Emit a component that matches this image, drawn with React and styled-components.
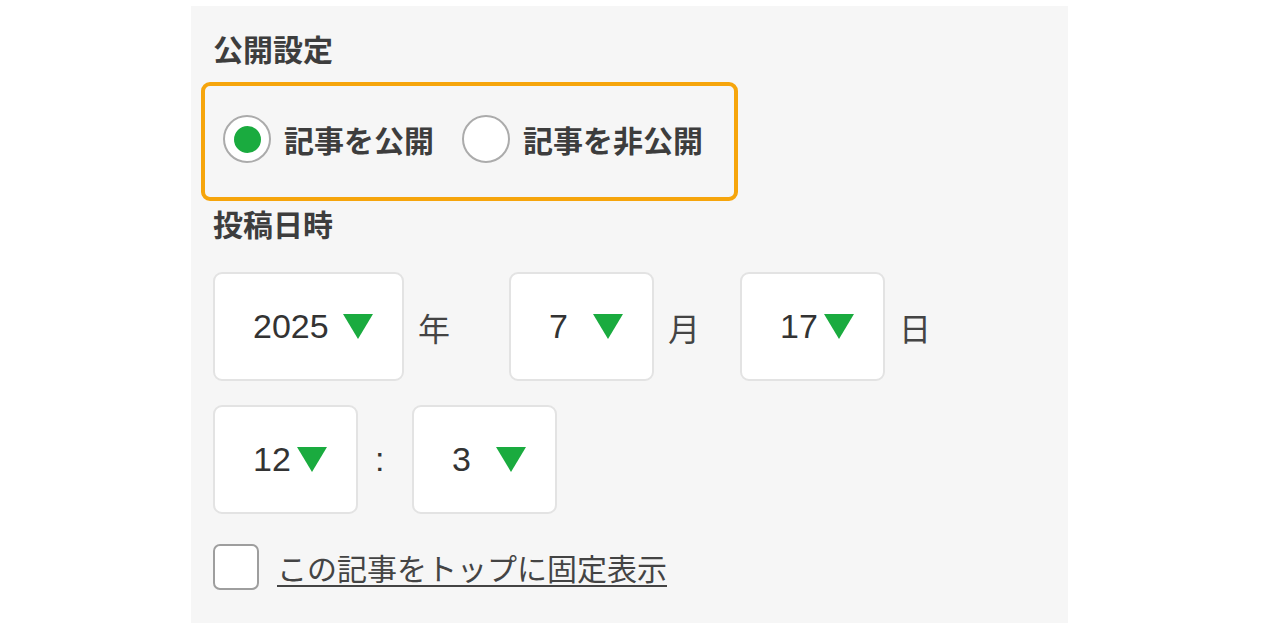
import React from "react";
import styled, { createGlobalStyle } from "styled-components";

const GlobalStyle = createGlobalStyle`
  body {
    margin: 0;
    background: #ffffff;
    font-family: "Noto Sans CJK JP", "Noto Sans", sans-serif;
  }
`;

// Styled components
const Panel = styled.div`
  margin: 6px 0 0 191px;
  width: 877px;
  height: 617px;
  box-sizing: border-box;
  padding: 22px 10px 0;
  background: #f6f6f6;
`;

const Heading = styled.h2`
  margin: ${(p) => p.$top || 0}px 0 0 12px;
  font-size: 30px;
  line-height: 40px;
  font-weight: 700;
  color: #3d3d3d;
`;

const StatusBox = styled.div`
  margin-top: 14px;
  width: 537px;
  height: 119px;
  box-sizing: border-box;
  border: 4px solid #f6a50c;
  border-radius: 9px;
  padding: 0 0 5px 18px;
  display: flex;
  align-items: center;
  gap: 28px;
`;

const Option = styled.label`
  display: flex;
  align-items: center;
  gap: 13px;
`;

const Radio = styled.span`
  width: 48px;
  height: 48px;
  box-sizing: border-box;
  border: 2px solid #ababab;
  border-radius: 50%;
  background: #ffffff;
  display: flex;
  align-items: center;
  justify-content: center;
`;

const Dot = styled.span`
  width: 27px;
  height: 27px;
  border-radius: 50%;
  background: #1aab3f;
`;

const OptionText = styled.span`
  font-size: 30px;
  line-height: 1;
  font-weight: 700;
  color: #3d3d3d;
`;

const DateRow = styled.div`
  margin: ${(p) => p.$top}px 0 0 12px;
  display: flex;
  align-items: center;
`;

const SelectBox = styled.div`
  height: 109px;
  box-sizing: border-box;
  border: 2px solid #e3e3e3;
  border-radius: 9px;
  background: #ffffff;
  padding: 0 29px 0 38px;
  display: flex;
  align-items: center;
`;

const Value = styled.span`
  width: ${(p) => p.$w}px;
  font-family: "Liberation Sans", Arial, sans-serif;
  font-size: 34px;
  color: #333333;
`;

const Unit = styled.span`
  width: ${(p) => p.$w}px;
  box-sizing: border-box;
  padding-left: ${(p) => p.$pad ?? 14}px;
  font-size: 32px;
  color: #444444;
`;

const Colon = styled(Unit)`
  font-family: "Liberation Sans", Arial, sans-serif;
  font-size: 34px;
  color: #333333;
`;

const CheckRow = styled.label`
  margin: 30px 0 0 12px;
  display: flex;
  align-items: center;
  gap: 18px;
`;

const CheckBox = styled.span`
  width: 46px;
  height: 46px;
  box-sizing: border-box;
  border: 2px solid #9e9e9e;
  border-radius: 7px;
  background: #ffffff;
`;

const CheckText = styled.span`
  font-size: 30px;
  line-height: 1.2;
  color: #444444;
  text-decoration: underline;
  text-decoration-thickness: 2px;
  text-underline-offset: 5px;
`;

const Arrow = () => (
  <svg width="30" height="25" viewBox="0 0 30 25">
    <polygon points="0,0 30,0 15,25" fill="#1aab3f" />
  </svg>
);

const Select = ({ value, w }) => (
  <SelectBox>
    <Value $w={w}>{value}</Value>
    <Arrow />
  </SelectBox>
);

const App = () => {
  return (
    <>
      <GlobalStyle />
      <Panel>
        <Heading>公開設定</Heading>
        <StatusBox>
          <Option>
            <Radio>
              <Dot />
            </Radio>
            <OptionText>記事を公開</OptionText>
          </Option>
          <Option>
            <Radio />
            <OptionText>記事を非公開</OptionText>
          </Option>
        </StatusBox>

        <Heading $top={2}>投稿日時</Heading>
        <DateRow $top={29}>
          <Select value="2025" w={90} />
          <Unit $w={105}>年</Unit>
          <Select value="7" w={44} />
          <Unit $w={86}>月</Unit>
          <Select value="17" w={44} />
          <Unit $w={60}>日</Unit>
        </DateRow>
        <DateRow $top={24}>
          <Select value="12" w={44} />
          <Colon $w={54} $pad={17}>
            :
          </Colon>
          <Select value="3" w={44} />
        </DateRow>

        <CheckRow>
          <CheckBox />
          <CheckText>この記事をトップに固定表示</CheckText>
        </CheckRow>
      </Panel>
    </>
  );
};

export default App;
